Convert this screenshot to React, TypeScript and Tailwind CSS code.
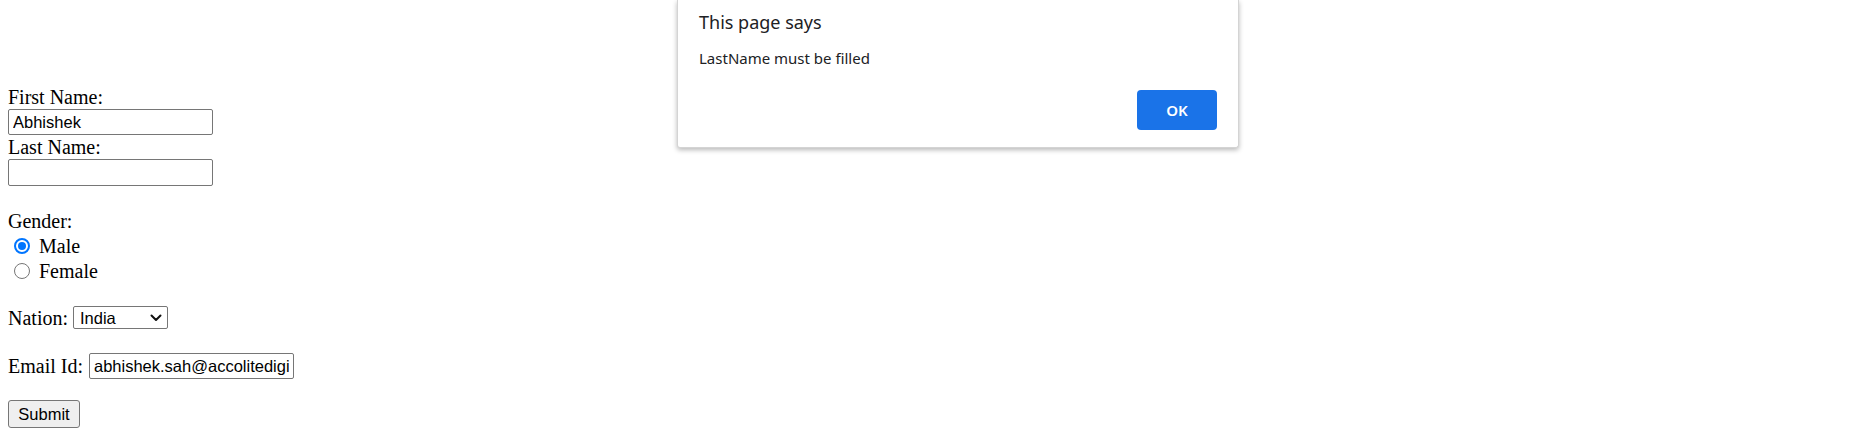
import React from 'react';

const Radio = ({ checked }: { checked?: boolean }) => (
  <span
    className={`ml-[6px] mr-[9px] w-[16px] h-[16px] rounded-full flex items-center justify-center bg-white ${
      checked ? 'border-[2px] border-[#0075ff]' : 'border border-[#767676]'
    }`}
  >
    {checked && <span className="w-[8px] h-[8px] rounded-full bg-[#0075ff]" />}
  </span>
);

export default function App() {
  return (
    <div className="relative w-[1866px] h-[439px] bg-white overflow-hidden">
      {/* the form */}
      <form
        className="flex flex-col items-start pl-[8px] pt-[86px] text-[20px] leading-[22px] text-black font-['Liberation_Serif',serif]"
        onSubmit={(e) => e.preventDefault()}
      >
        <div className="h-[22px]">First Name:</div>
        <div className="h-[28px] flex items-center">
          <input
            readOnly
            value="Abhishek"
            className="w-[205px] h-[26px] border border-[#767676] rounded-[2px] px-[4px] text-[16.5px] font-['Liberation_Sans',Arial,sans-serif] outline-none"
          />
        </div>
        <div className="h-[22px]">Last Name:</div>
        <div className="h-[28px] flex items-center">
          <input
            readOnly
            value=""
            className="w-[205px] h-[27px] border border-[#767676] rounded-[2px] px-[4px] text-[16.5px] font-['Liberation_Sans',Arial,sans-serif] outline-none"
          />
        </div>

        <div className="h-[24px]" />
        <div className="h-[23px]">Gender:</div>
        <div className="h-[25px] flex items-center">
          <Radio checked />
          <span>Male</span>
        </div>
        <div className="h-[25px] flex items-center">
          <Radio />
          <span>Female</span>
        </div>

        <div className="h-[22px]" />
        <div className="h-[25px] flex items-center gap-[5px]">
          <span>Nation:</span>
          <div className="w-[95px] h-[23px] border border-[#767676] rounded-[2px] flex items-center justify-between pl-[6px] pr-[5px] text-[16.5px] font-['Liberation_Sans',Arial,sans-serif]">
            <span>India</span>
            <svg width="12" height="8" viewBox="0 0 12 8" fill="none">
              <path d="M1.5 1.5 L6 6 L10.5 1.5" stroke="#111" strokeWidth="2" strokeLinecap="round" strokeLinejoin="round" />
            </svg>
          </div>
        </div>

        <div className="h-[22px]" />
        <div className="h-[28px] flex items-center gap-[6px]">
          <span>Email Id:</span>
          <input
            readOnly
            value="abhishek.sah@accolitedigital.com"
            className="w-[205px] h-[26px] border border-[#767676] rounded-[2px] px-[4px] text-[16.5px] font-['Liberation_Sans',Arial,sans-serif] outline-none"
          />
        </div>

        <div className="h-[20px]" />
        <div className="h-[28px] flex items-center">
          <button
            type="submit"
            className="w-[72px] h-[28px] bg-[#efefef] border border-[#767676] rounded-[3px] text-[16.5px] text-black font-['Liberation_Sans',Arial,sans-serif]"
          >
            Submit
          </button>
        </div>
      </form>

      {/* alert dialog, sits over the page */}
      <div className="absolute left-[677px] top-0 w-[562px] h-[148px] bg-white border border-t-0 border-[#d4d4d4] rounded-b-[3px] shadow-[0_2px_5px_rgba(0,0,0,0.28)] flex flex-col px-[21px] font-['Noto_Sans',sans-serif] text-[#202124]">
        <div className="mt-[10px] text-[18px] leading-[24px]">This page says</div>
        <div className="mt-[14px] text-[15px] leading-[20px]">LastName must be filled</div>
        <button className="self-end mt-[22px] w-[80px] h-[40px] rounded-[4px] bg-[#1a73e8] text-white text-[15px] font-semibold">
          OK
        </button>
      </div>
    </div>
  );
}
